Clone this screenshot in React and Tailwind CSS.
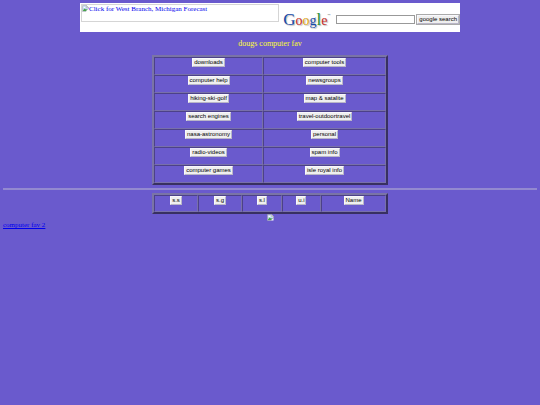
const rows = [
  ['downloads', 'computer tools'],
  ['computer help', 'newsgroups'],
  ['hiking-ski-golf', 'map & satalite'],
  ['search engines', 'travel-outdoortravel'],
  ['nasa-astronomy', 'personal'],
  ['radio-videos', 'spam info'],
  ['computer games', 'isle royal info'],
];

const shortcuts = [
  { label: 's.s', width: 'w-[19%]' },
  { label: 's.g', width: 'w-[19%]' },
  { label: 's.l', width: 'w-[17%]' },
  { label: 'u.i', width: 'w-[17%]' },
  { label: 'Name', width: 'w-[28%]' },
];

const tableClass =
  'mx-auto w-[236px] max-w-full table-fixed border-separate border-spacing-0 border-2 border-t-[#7a74a6] border-l-[#7a74a6] border-r-[#383061] border-b-[#383061]';
const cellClass =
  'border border-t-[#4c4188] border-l-[#4c4188] border-r-[#7870aa] border-b-[#7870aa] p-0 text-center align-top';

function Button({ children, type = 'button' }) {
  return (
    <button
      type={type}
      className="block h-[9px] shrink-0 border border-t-[#f8f8fc] border-l-[#f8f8fc] border-r-[#b9b6c8] border-b-[#b9b6c8] bg-[#efefef] px-px font-['Liberation_Sans',Arial,sans-serif] text-[6px] leading-[7px] whitespace-nowrap text-black"
    >
      {children}
    </button>
  );
}

function CellButton({ children }) {
  return (
    <div className="flex justify-center">
      <Button>{children}</Button>
    </div>
  );
}

function BrokenImage({ label }) {
  return (
    <svg viewBox="0 0 14 14" className="size-[7px] shrink-0" role="img" aria-label={label}>
      <path d="M1 1h8l4 4v3l-3 2-2 3H1z" fill="#c3d9f5" stroke="#a0a0a0" />
      <path d="M9 1v4h4z" fill="#fff" stroke="#a0a0a0" />
      <path d="M2 11l3-4 3 2 3-1-3 4H2z" fill="#48a548" />
      <path d="M3 5q1-2 3-1l1 2H3z" fill="#fff" />
      <path d="M13 8v5H8z" fill="#fff" />
    </svg>
  );
}

function Logo() {
  return (
    <div className="flex h-[18px] w-[47px] shrink-0 items-baseline font-['Liberation_Serif',serif] text-[14px] leading-[18px] [text-shadow:1px_1px_1px_#bbb]">
      <span className="text-[17px] text-[#1749a8]">G</span>
      <span className="text-[#c52a25]">o</span>
      <span className="text-[#dfa514]">o</span>
      <span className="text-[#1749a8]">g</span>
      <span className="text-[17px] text-[#27913a]">l</span>
      <span className="text-[#c52a25]">e</span>
      <span className="self-start pt-[3px] text-[3px] leading-[3px] text-[#555] [text-shadow:none]">™</span>
    </div>
  );
}

export default function App() {
  return (
    <main className="min-h-screen bg-[#6a5acd] p-[3px] font-['Liberation_Serif','Times_New_Roman',serif] text-[7px] leading-[8px]">
      <header className="mx-auto flex h-[29px] w-[380px] max-w-full bg-white pl-px">
        <a
          href="#forecast"
          className="mt-px flex h-[18px] min-w-0 flex-1 items-start border border-[#d5d5d5] text-[#0000ee]"
        >
          <BrokenImage label="" />
          <span>Click for West Branch, Michigan Forecast</span>
        </a>
        <form className="flex items-center pt-[4px] pl-[4px]" onSubmit={(e) => e.preventDefault()}>
          <Logo />
          <input
            type="text"
            aria-label="Google search"
            className="ml-[6px] h-[9px] w-[79px] border border-[#999] bg-white px-px font-['Liberation_Sans',Arial,sans-serif] text-[6px] leading-[7px] outline-none"
          />
          <div className="ml-px border border-[#aaa]">
            <Button type="submit">google search</Button>
          </div>
        </form>
      </header>

      <h1 className="mt-[7px] mb-[6px] text-center text-[8px] leading-[10px] text-[#ffff33]">dougs computer fav</h1>

      <table className={tableClass}>
        <tbody>
          {rows.map(([left, right]) => (
            <tr key={left} className="h-[18px]">
              <td className={`${cellClass} w-[47%]`}>
                <CellButton>{left}</CellButton>
              </td>
              <td className={cellClass}>
                <CellButton>{right}</CellButton>
              </td>
            </tr>
          ))}
        </tbody>
      </table>

      <hr className="my-[3px] border-t-2 border-[#9389d0]" />

      <table className={tableClass}>
        <tbody>
          <tr className="h-[17px]">
            {shortcuts.map(({ label, width }) => (
              <td key={label} className={`${cellClass} ${width}`}>
                <CellButton>{label}</CellButton>
              </td>
            ))}
          </tr>
        </tbody>
      </table>

      <div className="flex justify-center">
        <BrokenImage label="Counter" />
      </div>
      <a href="#computer-fav-2" className="text-[#0000ee] underline">
        computer fav 2
      </a>
    </main>
  );
}
